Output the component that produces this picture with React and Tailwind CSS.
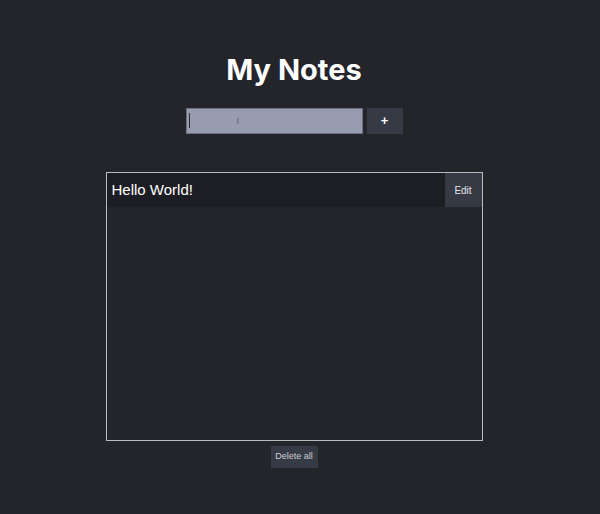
export default function App() {
  return (
    <div className="min-h-[514px] w-full bg-[#23252b] flex flex-col items-center pr-[12px]" style={{ fontFamily: "'Liberation Sans', Arial, sans-serif" }}>
      <h1 className="mt-[50px] text-[29px] leading-[40px] font-bold text-white" style={{ fontFamily: "Inter, 'Liberation Sans', sans-serif" }}>My Notes</h1>
      <div className="mt-[18px] flex items-center gap-[4px]">
        <div className="relative w-[177px] h-[26px] bg-[#979daf] border border-[#6b7080]">
          <span className="absolute left-[2px] top-[4px] w-[1px] h-[15px] bg-[#2a2d36]"></span>
          <span className="absolute left-[50px] top-[7px] text-[9px] leading-[10px] text-[#555a66]">I</span>
        </div>
        <button className="w-[36px] h-[26px] bg-[#363a44] text-white text-[13px] font-semibold flex items-center justify-center">+</button>
      </div>
      <div className="mt-[38px] w-[377px] h-[269px] border border-[#b9bbc0] flex flex-col">
        <div className="flex h-[34px] bg-[#1d1e23]">
          <div className="flex-1 flex items-center pl-[5px] text-[15px] text-white">Hello World!</div>
          <button className="w-[37px] h-[34px] bg-[#363a44] text-[10px] text-[#e5e6ea]">Edit</button>
        </div>
      </div>
      <button className="mt-[5px] w-[47px] h-[22px] bg-[#363a44] text-[9px] text-[#c9ccd3]">Delete all</button>
    </div>
  );
}
